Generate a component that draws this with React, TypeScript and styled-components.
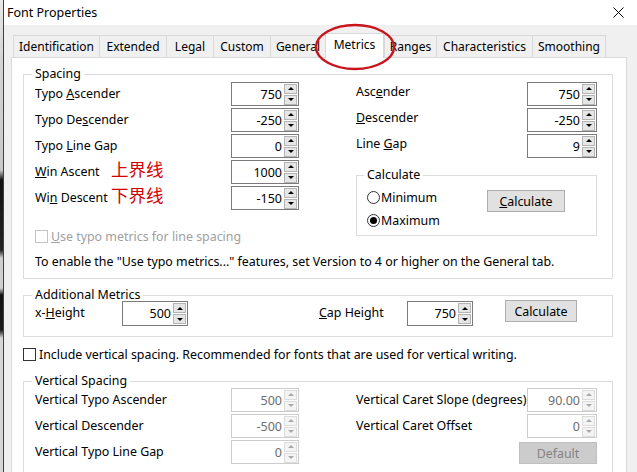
import React from 'react';
import styled, { createGlobalStyle } from 'styled-components';

const GlobalStyle = createGlobalStyle`
  html, body {
    margin: 0;
    padding: 0;
  }
  body {
    width: 637px;
    height: 472px;
    overflow: hidden;
    background: #f0f0f0;
    font-family: "Noto Sans", "Noto Sans CJK SC", sans-serif;
    font-size: 12.4px;
    color: #000;
  }
`;

const Screen = styled.div`
  display: flex;
  width: 637px;
  height: 472px;
  overflow: hidden;
`;

const BehindWindow = styled.div`
  width: 3px;
  flex-shrink: 0;
  background: linear-gradient(
    to bottom,
    #e8e8e8 0px,
    #d4d4d4 60px,
    #c9c9c9 170px,
    #111 180px,
    #222 250px,
    #cfcfcf 258px,
    #d0d0d0 288px,
    #111 295px,
    #1a1a1a 330px,
    #d6d6d6 338px,
    #d6d6d6 472px
  );
`;

const Dialog = styled.div`
  flex: 1;
  display: flex;
  flex-direction: column;
  border-left: 1px solid #3f3f3f;
  min-width: 0;
`;

const TitleBar = styled.div`
  height: 25px;
  flex-shrink: 0;
  display: flex;
  align-items: center;
  justify-content: space-between;
  padding: 0 13px 0 3px;
  background: #fff;
`;

const Title = styled.span`
  font-size: 12.5px;
  margin-top: -1px;
`;

const Body = styled.div`
  flex: 1;
  display: flex;
  flex-direction: column;
  padding: 8px 10px 0 7px;
  background: #f0f0f0;
  min-height: 0;
`;

const TabRow = styled.div`
  display: flex;
  align-items: flex-end;
  height: 24px;
  margin-left: 2px;
  flex-shrink: 0;
`;

const Tab = styled.div<{ $w: number; $active?: boolean }>`
  position: relative;
  box-sizing: border-box;
  width: ${(p) => p.$w}px;
  height: ${(p) => (p.$active ? 25 : 22)}px;
  margin-bottom: ${(p) => (p.$active ? -1 : 0)}px;
  z-index: ${(p) => (p.$active ? 2 : 1)};
  display: flex;
  align-items: center;
  justify-content: center;
  padding-bottom: ${(p) => (p.$active ? 3 : 0)}px;
  border: 1px solid #d9d9d9;
  border-bottom: none;
  border-right: ${(p) => (p.$active ? '1px solid #d9d9d9' : 'none')};
  background: ${(p) => (p.$active ? '#fff' : '#f0f0f0')};
  white-space: nowrap;
  font-size: 12px;

  &:last-child {
    border-right: 1px solid #d9d9d9;
  }
`;

const Marker = styled.svg`
  position: absolute;
  left: -13px;
  top: -12px;
  pointer-events: none;
  overflow: visible;
`;

const Panel = styled.div`
  flex: 1;
  display: flex;
  flex-direction: column;
  padding: 8px 13px 0 11px;
  background: #fff;
  border: 1px solid #d9d9d9;
  border-bottom: none;
`;

const Group = styled.fieldset<{ $top?: number; $bottom?: number; $left?: number }>`
  margin: ${(p) => p.$top ?? 0}px 0 0 0;
  padding: 0 15px ${(p) => p.$bottom ?? 0}px ${(p) => p.$left ?? 11}px;
  border: 1px solid #dcdcdc;
  min-width: 0;
`;

const Legend = styled.legend`
  padding: 0 3px;
  margin-left: -3px;
  line-height: 16px;
`;

const Columns = styled.div<{ $shift?: number }>`
  display: flex;
  align-items: flex-start;
  justify-content: space-between;
  margin-top: ${(p) => p.$shift ?? 0}px;
`;

const Column = styled.div<{ $w: number; $overhang?: number }>`
  width: ${(p) => p.$w}px;
  display: flex;
  flex-direction: column;
  margin-bottom: ${(p) => -(p.$overhang ?? 0)}px;
`;

const Row = styled.div`
  display: flex;
  align-items: center;
  height: 24px;
  margin-bottom: 2px;
`;

const FieldLabel = styled.div<{ $lift?: number; $clip?: boolean }>`
  flex: 1;
  min-width: 0;
  white-space: nowrap;
  overflow: ${(p) => (p.$clip ? 'hidden' : 'visible')};
  line-height: 24px;
  padding-bottom: ${(p) => p.$lift ?? 0}px;
`;

const LabelText = styled.span`
  display: inline-block;
  width: 76px;
`;

const Note = styled.span`
  display: inline-block;
  vertical-align: top;
  color: #d40000;
  font-family: "Noto Sans CJK SC", sans-serif;
  font-size: 17.5px;
  font-weight: 400;
  line-height: 18px;
`;

const Spin = styled.div<{ $w?: number; $h?: number; $disabled?: boolean }>`
  box-sizing: border-box;
  width: ${(p) => p.$w ?? 68}px;
  height: ${(p) => p.$h ?? 24}px;
  flex-shrink: 0;
  display: flex;
  align-items: center;
  border: 1px solid ${(p) => (p.$disabled ? '#cccccc' : '#7a7a7a')};
  background: #fff;
`;

const SpinValue = styled.span<{ $disabled?: boolean }>`
  flex: 1;
  text-align: right;
  padding-right: 2px;
  font-size: 12.5px;
  color: ${(p) => (p.$disabled ? '#6d6d6d' : '#000')};
`;

const SpinButtons = styled.div`
  display: flex;
  flex-direction: column;
  gap: 1px;
  width: 13px;
  margin-right: 1px;
`;

const SpinButton = styled.div<{ $disabled?: boolean }>`
  box-sizing: border-box;
  height: 10px;
  display: flex;
  align-items: center;
  justify-content: center;
  border: 1px solid ${(p) => (p.$disabled ? '#dcdcdc' : '#b4b4b4')};
  background: ${(p) => (p.$disabled ? '#f4f4f4' : '#e6e6e6')};
`;

const Arrow = styled.span<{ $down?: boolean; $disabled?: boolean }>`
  width: 0;
  height: 0;
  border-left: 3px solid transparent;
  border-right: 3px solid transparent;
  ${(p) =>
    p.$down
      ? `border-top: 3px solid ${p.$disabled ? '#a8a8a8' : '#000'};`
      : `border-bottom: 3px solid ${p.$disabled ? '#a8a8a8' : '#000'};`}
`;

const Button = styled.div<{ $w: number; $disabled?: boolean }>`
  box-sizing: border-box;
  width: ${(p) => p.$w}px;
  height: 22px;
  display: flex;
  align-items: center;
  justify-content: center;
  border: 1px solid ${(p) => (p.$disabled ? '#bfbfbf' : '#adadad')};
  background: ${(p) => (p.$disabled ? '#cccccc' : '#e1e1e1')};
  color: ${(p) => (p.$disabled ? '#838383' : '#000')};
  flex-shrink: 0;
  white-space: nowrap;
`;

const CalcBody = styled.div`
  display: flex;
  align-items: flex-start;
  padding-bottom: 4px;
`;

const RadioList = styled.div`
  display: flex;
  flex-direction: column;
  gap: 1px;
  padding-top: 3px;
`;

const RadioRow = styled.div`
  display: flex;
  align-items: center;
  height: 22px;
  gap: 1px;
`;

const RadioDot = styled.span<{ $checked?: boolean }>`
  box-sizing: border-box;
  width: 13px;
  height: 13px;
  border-radius: 50%;
  border: 1px solid #333;
  background: #fff;
  display: flex;
  align-items: center;
  justify-content: center;

  &::after {
    content: '';
    width: 7px;
    height: 7px;
    border-radius: 50%;
    background: ${(p) => (p.$checked ? '#000' : 'transparent')};
  }
`;

const CalcButtonSlot = styled.div`
  margin: 7px 16px 0 auto;
`;

const CheckRow = styled.div<{ $top: number; $disabled?: boolean }>`
  display: flex;
  align-items: center;
  gap: 3px;
  height: 18px;
  margin-top: ${(p) => p.$top}px;
  color: ${(p) => (p.$disabled ? '#a0a0a0' : '#000')};
  white-space: nowrap;
`;

const CheckBox = styled.span<{ $disabled?: boolean }>`
  box-sizing: border-box;
  width: 13px;
  height: 13px;
  border: 1px solid ${(p) => (p.$disabled ? '#c4c4c4' : '#333')};
  background: #fff;
  flex-shrink: 0;
`;

const InfoText = styled.div`
  margin-top: 8px;
  line-height: 18px;
  white-space: nowrap;
`;

const MetricsGrid = styled.div`
  display: grid;
  grid-template-columns: 87px 66px 131px 88px 66px 32px 72px;
  align-items: center;
  margin-top: -2px;
`;

const GridLabel = styled.span`
  padding-bottom: 3px;
  white-space: nowrap;
`;

const ButtonCell = styled.div`
  grid-column: 7;
  align-self: start;
  margin-top: -1px;
`;

const DefaultSlot = styled.div`
  display: flex;
  justify-content: flex-end;
  padding-top: 2px;
`;

type SpinProps = { value: string; disabled?: boolean; w?: number; h?: number };

const SpinBox = ({ value, disabled, w, h }: SpinProps) => (
  <Spin $w={w} $h={h} $disabled={disabled}>
    <SpinValue $disabled={disabled}>{value}</SpinValue>
    <SpinButtons>
      <SpinButton $disabled={disabled}>
        <Arrow $disabled={disabled} />
      </SpinButton>
      <SpinButton $disabled={disabled}>
        <Arrow $down $disabled={disabled} />
      </SpinButton>
    </SpinButtons>
  </Spin>
);

const tabs = [
  { name: 'Identification', w: 86 },
  { name: 'Extended', w: 67 },
  { name: 'Legal', w: 47 },
  { name: 'Custom', w: 57 },
  { name: 'General', w: 55 },
  { name: 'Metrics', w: 59, active: true },
  { name: 'Ranges', w: 52 },
  { name: 'Characteristics', w: 96 },
  { name: 'Smoothing', w: 74 },
];

const spacingLeft = [
  { label: <>Typo <u>A</u>scender</>, value: '750' },
  { label: <>Typo De<u>s</u>cender</>, value: '-250' },
  { label: <>Typo <u>L</u>ine Gap</>, value: '0' },
  {
    label: (
      <>
        <LabelText>
          <u>W</u>in Ascent
        </LabelText>
        <Note>上界线</Note>
      </>
    ),
    value: '1000',
  },
  {
    label: (
      <>
        <LabelText>
          Wi<u>n</u> Descent
        </LabelText>
        <Note>下界线</Note>
      </>
    ),
    value: '-150',
  },
];

const spacingRight = [
  { label: <>Asc<u>e</u>nder</>, value: '750' },
  { label: <><u>D</u>escender</>, value: '-250' },
  { label: <>Line <u>G</u>ap</>, value: '9' },
];

const verticalLeft = [
  { label: 'Vertical Typo Ascender', value: '500' },
  { label: 'Vertical Descender', value: '-500' },
  { label: 'Vertical Typo Line Gap', value: '0' },
];

const verticalRight = [
  { label: 'Vertical Caret Slope (degrees)', value: '90.00' },
  { label: 'Vertical Caret Offset', value: '0' },
];

const App = () => {
  return (
    <Screen>
      <GlobalStyle />
      <BehindWindow />
      <Dialog>
        <TitleBar>
          <Title>Font Properties</Title>
          <svg width="11" height="11" viewBox="0 0 11 11">
            <path d="M0.5 0.5 L10.5 10.5 M10.5 0.5 L0.5 10.5" stroke="#000" strokeWidth="1" fill="none" />
          </svg>
        </TitleBar>
        <Body>
          <TabRow>
            {tabs.map((t) => (
              <Tab key={t.name} $w={t.w} $active={t.active}>
                {t.name}
                {t.active && (
                  <Marker width="84" height="50" viewBox="0 0 84 50">
                    <ellipse cx="42" cy="25" rx="39" ry="22" fill="none" stroke="#c8141a" strokeWidth="2.4" />
                  </Marker>
                )}
              </Tab>
            ))}
          </TabRow>
          <Panel>
            <Group $bottom={7}>
              <Legend>Spacing</Legend>
              <Columns>
                <Column $w={264}>
                  {spacingLeft.map((r, i) => (
                    <Row key={i}>
                      <FieldLabel>{r.label}</FieldLabel>
                      <SpinBox value={r.value} />
                    </Row>
                  ))}
                </Column>
                <Column $w={241} $overhang={25}>
                  {spacingRight.map((r, i) => (
                    <Row key={i}>
                      <FieldLabel $lift={4}>{r.label}</FieldLabel>
                      <SpinBox value={r.value} w={70} />
                    </Row>
                  ))}
                  <Group $top={7} $left={10}>
                    <Legend>Calculate</Legend>
                    <CalcBody>
                      <RadioList>
                        <RadioRow>
                          <RadioDot />
                          Minimum
                        </RadioRow>
                        <RadioRow>
                          <RadioDot $checked />
                          Maximum
                        </RadioRow>
                      </RadioList>
                      <CalcButtonSlot>
                        <Button $w={78}>
                          <span>
                            <u>C</u>alculate
                          </span>
                        </Button>
                      </CalcButtonSlot>
                    </CalcBody>
                  </Group>
                </Column>
              </Columns>
              <CheckRow $top={15} $disabled>
                <CheckBox $disabled />
                <span>
                  <u>U</u>se typo metrics for line spacing
                </span>
              </CheckRow>
              <InfoText>
                To enable the "Use typo metrics..." features, set Version to 4 or higher on the General tab.
              </InfoText>
            </Group>

            <Group $top={8} $bottom={10}>
              <Legend>Additional Metrics</Legend>
              <MetricsGrid>
                <GridLabel>
                  x-<u>H</u>eight
                </GridLabel>
                <SpinBox value="500" w={66} h={25} />
                <span />
                <GridLabel>
                  <u>C</u>ap Height
                </GridLabel>
                <SpinBox value="750" w={66} h={25} />
                <ButtonCell>
                  <Button $w={72}>Calculate</Button>
                </ButtonCell>
              </MetricsGrid>
            </Group>

            <CheckRow $top={8}>
              <CheckBox />
              <span>Include vertical spacing. Recommended for fonts that are used for vertical writing.</span>
            </CheckRow>

            <Group $top={10} $bottom={30}>
              <Legend>Vertical Spacing</Legend>
              <Columns $shift={-1}>
                <Column $w={264}>
                  {verticalLeft.map((r) => (
                    <Row key={r.label}>
                      <FieldLabel>{r.label}</FieldLabel>
                      <SpinBox value={r.value} disabled />
                    </Row>
                  ))}
                </Column>
                <Column $w={241}>
                  {verticalRight.map((r) => (
                    <Row key={r.label}>
                      <FieldLabel $clip>{r.label}</FieldLabel>
                      <SpinBox value={r.value} w={70} disabled />
                    </Row>
                  ))}
                  <DefaultSlot>
                    <Button $w={78} $disabled>
                      Default
                    </Button>
                  </DefaultSlot>
                </Column>
              </Columns>
            </Group>
          </Panel>
        </Body>
      </Dialog>
    </Screen>
  );
};

export default App;
